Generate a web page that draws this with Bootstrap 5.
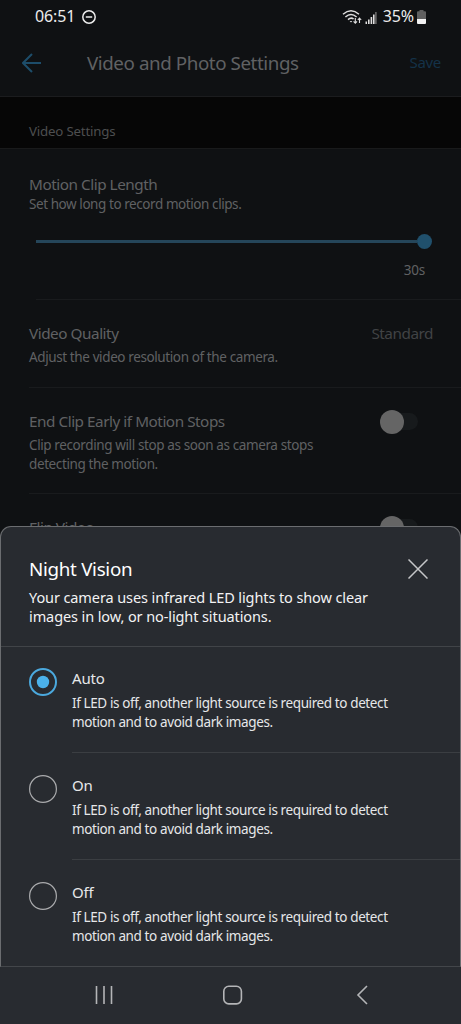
<!DOCTYPE html>
<html lang="en" data-bs-theme="dark">
<head>
<meta charset="utf-8">
<meta name="viewport" content="width=device-width, initial-scale=1">
<title>Video and Photo Settings</title>
<link href="https://cdn.jsdelivr.net/npm/bootstrap@5.3.0/dist/css/bootstrap.min.css" rel="stylesheet">
<style>
  body { font-family: "Noto Sans", sans-serif; background: #0f1113; color: #606163; }
  .phone { width: 461px; height: 1024px; font-size: 13.5px; line-height: 19.3px; }
  .phone svg { display: block; flex: none; }
  .statusbar { height: 34px; padding: 0 35px 0 35px; color: #ececec; font-size: 16px; }
  .clock { letter-spacing: -.15px; width: 47px; }
  .battery-text { letter-spacing: -.1px; font-size: 16px; margin-left: 6px; }
  .topbar { height: 63px; padding: 0 20px 4px 22px; border-bottom: 1px solid #1b1c1e; }
  .page-title { font-size: 18.8px; letter-spacing: -.43px; margin-left: 45px; line-height: 24px; color: #606163; }
  .save { color: #143248; font-size: 15px; letter-spacing: -.3px; }
  .section-band { height: 52px; padding: 25px 29px 0; background: #060606; border-bottom: 1px solid #191a1b; color: #4d4e4f; font-size: 13.3px; letter-spacing: -.2px; }
  .setting-title { font-size: 15.3px; letter-spacing: -.47px; line-height: 20px; }
  .setting-text { letter-spacing: -.39px; }
  .rule { height: 1px; background: #191b1d; }
  .clip-length { height: 150px; padding: 25px 28px 0 29px; }
  .clip-length .setting-text { margin-top: 1px; letter-spacing: -.43px; }
  .slider { margin: 20px 1px 0 7px; height: 15px; }
  .slider-line { height: 3px; background: #25465a; }
  .slider-knob { width: 15px; height: 15px; border-radius: 50%; background: #20506c; }
  .seconds { margin: 12px 8px 0 0; letter-spacing: -.2px; }
  .row-quality { height: 87px; padding: 23px 28px 0 29px; }
  .row-early { height: 105px; padding: 23px 43px 0 29px; }
  .row-flip { height: 60px; padding: 23px 43px 0 29px; }
  .setting-gap { margin-top: 4.500px; }
  .muted-value { color: #414345; }
  .toggle { width: 37px; height: 17px; margin-top: 2px; border-radius: 9px; background: #171a1c; }
  .toggle-knob { width: 24px; height: 24px; border-radius: 50%; background: #656565; margin-left: -1px; flex: none; }
  .sheet { top: 526px; left: 0; width: 461px; height: 441px; background: #282b30; border: 1px solid #6b6d70; border-radius: 11px 11px 0 0; border-bottom-color: #43464a; color: #e6e7e9; }
  .sheet-head { height: 120px; padding: 30px 32px 0 28px; border-bottom: 1px solid #414448; color: #f3f3f4; }
  .sheet-title { font-size: 18.8px; letter-spacing: -.3px; line-height: 24px; }
  .sheet-text { font-size: 14.5px; letter-spacing: -.1px; margin-top: 6.500px; }
  .option { height: 107px; padding: 21px 0 0 28px; gap: 15px; }
  .option-body { border-bottom: 1px solid #3b3e42; height: 85px; }
  .option:last-child .option-body { border: 0; }
  .option-title { font-size: 15px; letter-spacing: -.2px; line-height: 20px; margin-bottom: 5.500px; }
  .navkeys { top: 967px; left: 0; width: 461px; height: 57px; background: #282b30; }
</style>
</head>
<body>
<main class="phone position-relative overflow-hidden text-nowrap">
  <div class="statusbar d-flex align-items-center">
    <span class="clock">06:51</span>
    <svg width="14" height="14" viewBox="0 0 14 14" fill="none" stroke="#ececec" stroke-width="1.5"><circle cx="7" cy="7" r="6.2"/><path d="M3.8 7h6.4"/></svg>
    <svg class="ms-auto" width="20" height="16" viewBox="0 0 20 16" fill="none" stroke="#dedede" stroke-width="1.5"><path d="M1 5.2Q9 -1.8 17 5.2M3.4 8Q9 3 14.6 8M6 10.6Q9 8 11.6 10"/><path d="M7.7 12h2.6L9 13.6z" fill="#dedede" stroke="none"/><path d="M13.3 9v5M11.6 12.4l1.7 1.9 1.7-1.9M17.5 14V9.5M15.8 11l1.7-1.9 1.7 1.9" stroke-width="1.1"/></svg>
    <svg style="margin-left:3px" width="12" height="13" viewBox="0 0 12 13" fill="#dedede"><path d="M.5 10.5h1.5V13H.5zM3 8.5h1.6V13H3zM5.6 6h1.6v7H5.6zM8 3.4h1.6V13H8z"/><path d="M10.2 1h1.4v12h-1.4z" fill="#777"/></svg>
    <span class="battery-text">35%</span>
    <svg style="margin-left:3px" width="9" height="14" viewBox="0 0 9 14"><path d="M2.5 0h4v1.2H8a1 1 0 0 1 1 1V9H0V2.200a1 1 0 0 1 1-1h1.500z" fill="#606060"/><path d="M0 9h9v4a1 1 0 0 1-1 1H1a1 1 0 0 1-1-1z" fill="#f2f2f2"/></svg>
  </div>
  <header class="topbar d-flex align-items-center">
    <svg width="20" height="20" viewBox="0 0 20 20" fill="none" stroke="#1d4d6a" stroke-width="2"><path d="M19 10H1M10 1L1 10l9 9"/></svg>
    <h1 class="page-title mb-0 fw-normal">Video and Photo Settings</h1>
    <span class="save ms-auto">Save</span>
  </header>
  <div class="section-band">Video Settings</div>

  <section class="clip-length">
    <div class="setting-title">Motion Clip Length</div>
    <div class="setting-text">Set how long to record motion clips.</div>
    <div class="slider d-flex align-items-center"><div class="slider-line flex-grow-1"></div><div class="slider-knob"></div></div>
    <div class="seconds text-end">30s</div>
  </section>
  <div class="rule" style="margin-left:36px"></div>
  <section class="row-quality">
    <div class="d-flex justify-content-between setting-title"><span>Video Quality</span><span class="muted-value">Standard</span></div>
    <div class="setting-text setting-gap">Adjust the video resolution of the camera.</div>
  </section>
  <div class="rule" style="margin-left:29px"></div>
  <section class="row-early d-flex justify-content-between">
    <div>
      <div class="setting-title">End Clip Early if Motion Stops</div>
      <div class="setting-text setting-gap">Clip recording will stop as soon as camera stops<br>detecting the motion.</div>
    </div>
    <div class="toggle d-flex align-items-center"><div class="toggle-knob"></div></div>
  </section>
  <div class="rule" style="margin-left:29px"></div>
  <section class="row-flip d-flex justify-content-between">
    <div class="setting-title">Flip Video</div>
    <div class="toggle d-flex align-items-center"><div class="toggle-knob"></div></div>
  </section>

  <section class="sheet position-absolute">
    <div class="sheet-head d-flex justify-content-between">
      <div>
        <h2 class="sheet-title mb-0 fw-normal">Night Vision</h2>
        <div class="sheet-text">Your camera uses infrared LED lights to show clear<br>images in low, or no-light situations.</div>
      </div>
      <svg style="margin-top:2px" width="20" height="20" viewBox="0 0 20 20" stroke="#c5c6c8" stroke-width="1.5"><path d="M.5.5l19 19M19.500.5l-19 19"/></svg>
    </div>
    <div class="option d-flex">
      <svg width="28" height="28" viewBox="0 0 28 28"><circle cx="14" cy="14" r="13" fill="none" stroke="#4ba9de" stroke-width="2"/><circle cx="14" cy="14" r="6.200" fill="#4bb1ea"/></svg>
      <div class="option-body flex-grow-1">
        <div class="option-title">Auto</div>
        <div class="setting-text">If LED is off, another light source is required to detect<br>motion and to avoid dark images.</div>
      </div>
    </div>
    <div class="option d-flex">
      <svg width="28" height="28" viewBox="0 0 28 28"><circle cx="14" cy="14" r="13.400" fill="none" stroke="#aaabad" stroke-width="1.200"/></svg>
      <div class="option-body flex-grow-1">
        <div class="option-title">On</div>
        <div class="setting-text">If LED is off, another light source is required to detect<br>motion and to avoid dark images.</div>
      </div>
    </div>
    <div class="option d-flex">
      <svg width="28" height="28" viewBox="0 0 28 28"><circle cx="14" cy="14" r="13.400" fill="none" stroke="#aaabad" stroke-width="1.200"/></svg>
      <div class="option-body flex-grow-1">
        <div class="option-title">Off</div>
        <div class="setting-text">If LED is off, another light source is required to detect<br>motion and to avoid dark images.</div>
      </div>
    </div>
  </section>

  <nav class="navkeys position-absolute d-flex align-items-center">
    <svg width="461" height="57" viewBox="0 0 461 57" fill="none" stroke="#b4b5b7" stroke-width="1.600"><path d="M96.500 19v18M104 19v18M111.500 19v18"/><rect x="223.800" y="19.300" width="17.600" height="17.600" rx="5"/><path d="M367 19l-9 9 9 9"/></svg>
  </nav>
</main>
<script src="https://cdn.jsdelivr.net/npm/bootstrap@5.3.0/dist/js/bootstrap.bundle.min.js"></script>
</body>
</html>
